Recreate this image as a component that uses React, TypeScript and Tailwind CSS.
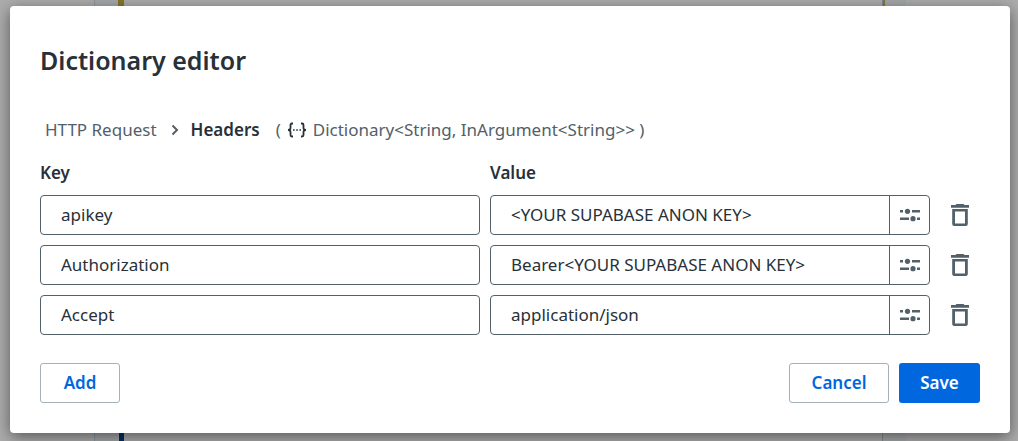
import { useState } from "react";

type Entry = { id: number; key: string; value: string };

const initialEntries: Entry[] = [
  { id: 1, key: "apikey", value: "<YOUR SUPABASE ANON KEY>" },
  { id: 2, key: "Authorization", value: "Bearer<YOUR SUPABASE ANON KEY>" },
  { id: 3, key: "Accept", value: "application/json" },
];

function ChevronIcon() {
  return (
    <svg width="8" height="12" viewBox="0 0 8 12" fill="none" stroke="#526069" strokeWidth="2" aria-hidden="true">
      <path d="M1.5 1.5 6 6 1.5 10.5" />
    </svg>
  );
}

function BracesIcon() {
  return (
    <svg width="20" height="16" viewBox="0 0 20 16" fill="none" stroke="#273139" strokeWidth="1.8" aria-hidden="true">
      <path d="M6 1.5H5Q3.5 1.5 3.5 3V6Q3.5 8 1 8Q3.5 8 3.5 10V13Q3.5 14.5 5 14.5H6" />
      <path d="M14 1.5H15Q16.5 1.5 16.5 3V6Q16.5 8 19 8Q16.5 8 16.5 10V13Q16.5 14.5 15 14.5H14" />
      <path d="M6 8H14" strokeWidth="1.5" strokeDasharray="1.6 1.6" />
    </svg>
  );
}

function SlidersIcon() {
  return (
    <svg width="20" height="14" viewBox="0 0 20 14" fill="#526069" aria-hidden="true">
      <path d="M0 2h3v2.500H0zM12 2h8v2.500h-8zM0 9.500h9V12H0zM17 9.500h3V12h-3z" />
      <circle cx="7.500" cy="3.300" r="2.600" />
      <circle cx="13" cy="10.700" r="2.600" />
    </svg>
  );
}

function TrashIcon() {
  return (
    <svg width="18" height="22" viewBox="0 0 18 22" fill="#526069" aria-hidden="true">
      <path d="M5.500 0h7l1 1H18v2.700H0V1h4.500z" />
      <path fillRule="evenodd" d="M1.200 5h15.600v15q0 2-2 2H3.200q-2 0-2-2zM4 7.400v12.200h10V7.400z" />
    </svg>
  );
}

function CanvasBackdrop() {
  return (
    <div className="absolute inset-0 flex bg-[#adadad]" aria-hidden="true">
      <div className="w-[94px] shrink-0" />
      <div className="w-6 shrink-0 border-l border-[#8b97a0] bg-[#a6a9aa]" />
      <div className="flex w-[6px] shrink-0 flex-col">
        <div className="flex-1 bg-[#85762a]" />
        <div className="ml-px flex-1 bg-[#002f6b]" />
      </div>
      <div className="flex-1" />
      <div className="flex w-[3px] shrink-0 flex-col border-l border-[#808b92]">
        <div className="flex-1 bg-[#857a3c]" />
        <div className="flex-1 bg-[#a6a9aa]" />
      </div>
      <div className="w-[21px] shrink-0 bg-[#a6a9aa]" />
      <div className="w-28 shrink-0" />
    </div>
  );
}

export default function App() {
  const [entries, setEntries] = useState(initialEntries);

  const update = (id: number, patch: Partial<Entry>) =>
    setEntries((list) => list.map((e) => (e.id === id ? { ...e, ...patch } : e)));
  const remove = (id: number) => setEntries((list) => list.filter((e) => e.id !== id));
  const add = () => setEntries((list) => [...list, { id: Date.now(), key: "", value: "" }]);

  return (
    <div className="relative min-h-screen pt-[6px] pr-2 pb-2 pl-[10px] font-['Noto_Sans',sans-serif] text-[17px] leading-6 text-[#273139]">
      <CanvasBackdrop />
      <section
        role="dialog"
        aria-labelledby="dialog-title"
        className="relative rounded bg-white px-[30px] pt-9 pb-[30px] shadow-[0_4px_16px_rgba(0,0,0,0.5)]"
      >
        <h1 id="dialog-title" className="text-[25px] leading-9 font-semibold">
          Dictionary editor
        </h1>

        <div className="mt-10 flex items-center pl-[5px] text-[#526069]">
          <span>HTTP Request</span>
          <span className="mr-3 ml-[14px]">
            <ChevronIcon />
          </span>
          <strong className="font-semibold text-[#273139]">Headers</strong>
          <span className="ml-4">(</span>
          <span className="mx-[6px]">
            <BracesIcon />
          </span>
          <span>Dictionary&lt;String, InArgument&lt;String&gt;&gt; )</span>
        </div>

        <div className="mt-[19px] grid grid-cols-[1fr_1fr_40px] gap-x-[10px] font-semibold">
          <span id="key-heading">Key</span>
          <span id="value-heading">Value</span>
        </div>

        <div className="mt-[10px] flex flex-col gap-[10px]">
          {entries.map((entry) => (
            <div key={entry.id} className="grid grid-cols-[1fr_1fr_40px] gap-x-[10px]">
              <div className="flex h-10 rounded border border-[#526069]">
                <input
                  aria-labelledby="key-heading"
                  className="min-w-0 flex-1 px-5 pb-px"
                  value={entry.key}
                  onChange={(e) => update(entry.id, { key: e.target.value })}
                />
              </div>
              <div className="flex h-10 rounded border border-[#526069]">
                <input
                  aria-labelledby="value-heading"
                  className="min-w-0 flex-1 px-5 pb-px"
                  value={entry.value}
                  onChange={(e) => update(entry.id, { value: e.target.value })}
                />
                <button
                  type="button"
                  aria-label="Open value options"
                  className="flex w-10 items-center justify-center border-l border-[#526069]"
                >
                  <SlidersIcon />
                </button>
              </div>
              <button
                type="button"
                aria-label="Delete entry"
                className="flex items-center justify-center"
                onClick={() => remove(entry.id)}
              >
                <TrashIcon />
              </button>
            </div>
          ))}
        </div>

        <div className="mt-7 flex gap-[10px] font-semibold">
          <button
            type="button"
            onClick={add}
            className="mr-auto h-10 w-20 rounded-[3px] border border-[#a4b1b8] text-[#0067df]"
          >
            Add
          </button>
          <button type="button" className="h-10 w-[100px] rounded-[3px] border border-[#a4b1b8] text-[#0067df]">
            Cancel
          </button>
          <button type="button" className="h-10 w-[81px] rounded-[3px] bg-[#0067df] text-white">
            Save
          </button>
        </div>
      </section>
    </div>
  );
}
